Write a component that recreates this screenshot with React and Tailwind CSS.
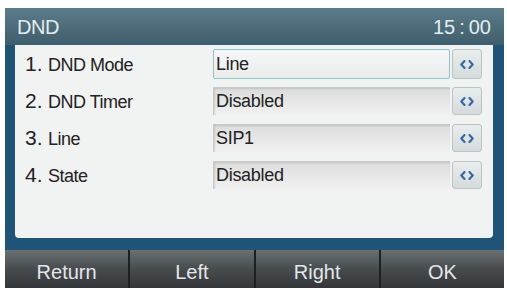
const rows = [
  { num: "1.", label: "DND Mode", value: "Line", active: true },
  { num: "2.", label: "DND Timer", value: "Disabled" },
  { num: "3.", label: "Line", value: "SIP1" },
  { num: "4.", label: "State", value: "Disabled" },
];

const softkeys = ["Return", "Left", "Right", "OK"];

// 左右切换箭头
function Arrows() {
  return (
    <svg width="14" height="9" viewBox="0 0 14 9" fill="none">
      <path d="M4.5 1 L1.3 4.5 L4.5 8" stroke="#2f6aa3" strokeWidth="2.1" strokeLinecap="round" strokeLinejoin="round" />
      <path d="M9.5 1 L12.7 4.5 L9.5 8" stroke="#2f6aa3" strokeWidth="2.1" strokeLinecap="round" strokeLinejoin="round" />
    </svg>
  );
}

export default function App() {
  return (
    <div
      className="w-[507px] h-[292px] bg-white pt-[8px] pl-[5px] pr-[3px] pb-[4px]"
      style={{ fontFamily: '"Liberation Sans", Arial, sans-serif' }}
    >
      <div className="w-[499px] h-[280px] flex flex-col">
        {/* 标题栏 */}
        <div className="h-[37px] flex items-center justify-between px-[12px] pt-[1px] bg-gradient-to-b from-[#5b7c8a] to-[#3e5e6c] text-[#e6ecee] text-[20px]">
          <span className="tracking-[-0.5px]">DND</span>
          <span className="flex items-center pr-[1px]">
            15<span className="mx-[4px]">:</span>00
          </span>
        </div>

        {/* 设置列表 */}
        <div className="bg-[#1e5478] px-[10px] pr-[11px] pb-[12px]">
          <div className="h-[193px] bg-[#f1f2f2] rounded-b-[4px] pt-[4px] flex flex-col gap-[7px]">
            {rows.map((row) => (
              <div key={row.num} className="h-[30px] flex items-center">
                <div className="w-[198px] pl-[10px] flex items-baseline text-[#222]">
                  <span className="text-[21px] w-[23px]">{row.num}</span>
                  <span className="text-[18px] tracking-[-0.5px]">{row.label}</span>
                </div>
                <div className="flex-1 h-full flex items-center gap-[2px] pr-[11px]">
                  <div
                    className={
                      row.active
                        ? "w-[237px] h-full flex items-center pl-[2px] text-[18px] tracking-[-0.3px] text-[#222] bg-gradient-to-b from-[#f6f7f7] to-[#e9eceb] border border-[#86c7c9] rounded-[2px]"
                        : "w-[237px] h-[28px] flex items-center pl-[2px] text-[18px] tracking-[-0.3px] text-[#222] bg-gradient-to-b from-[#dcdcdc] to-[#f1f1f1] border-t border-l border-[#c9c9c9] shadow-[inset_1px_1px_2px_rgba(0,0,0,0.12)]"
                    }
                  >
                    {row.value}
                  </div>
                  <div
                    className={
                      (row.active ? "h-full" : "h-[28px]") +
                      " w-[30px] flex items-center justify-center rounded-[3px] border border-[#bcc3c5] bg-gradient-to-b from-[#e9eded] to-[#d5dadb]"
                    }
                  >
                    <Arrows />
                  </div>
                </div>
              </div>
            ))}
          </div>
        </div>

        {/* 软键 */}
        <div className="h-[38px] flex bg-[#1e1f21] gap-[2px]">
          {softkeys.map((key) => (
            <div
              key={key}
              className="flex-1 flex items-center justify-center pt-[5px] text-[20px] text-[#e4e6e7] bg-gradient-to-b from-[#6b7073] via-[#474b4e] to-[#33373a]"
            >
              {key}
            </div>
          ))}
        </div>
      </div>
    </div>
  );
}
